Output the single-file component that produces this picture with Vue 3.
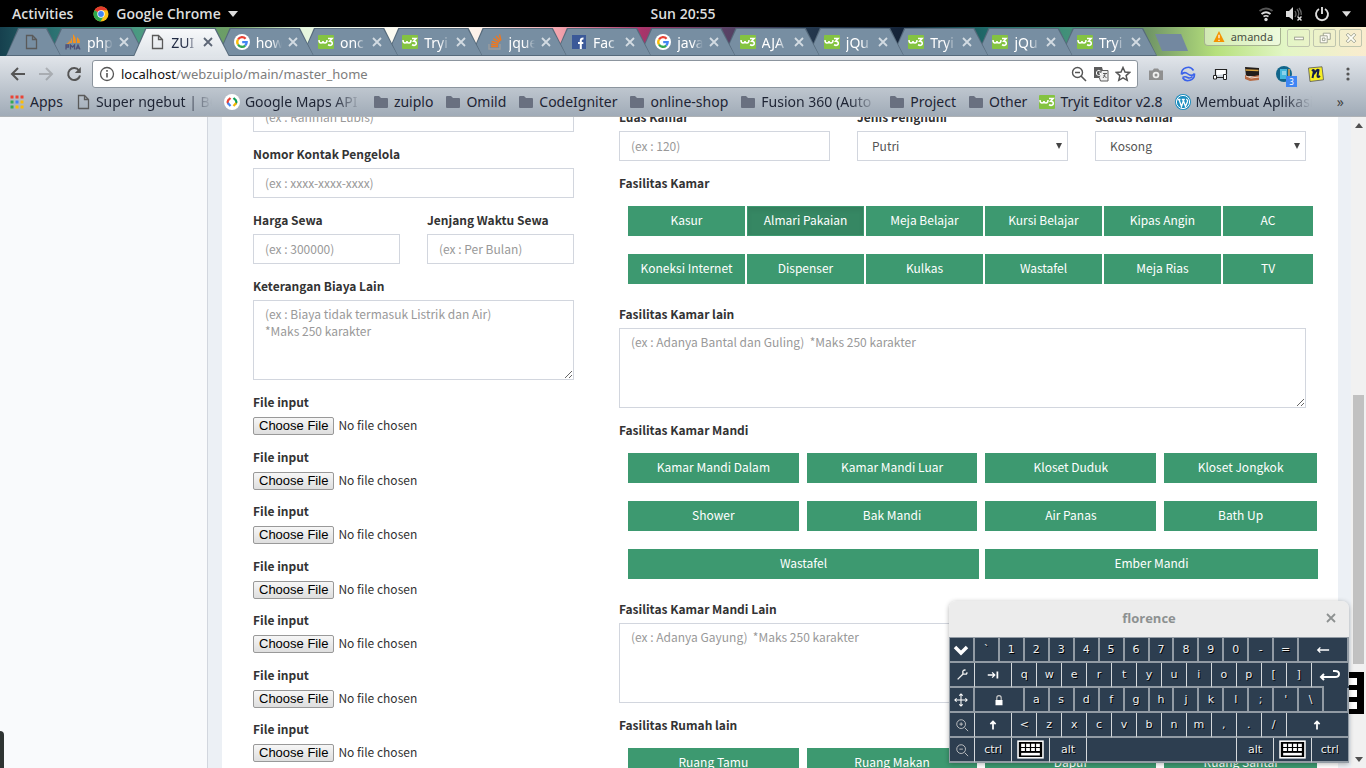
<script setup>
const tabs = [
  { icon: 'pma', title: 'php' },
  { icon: 'doc', title: 'ZUI', active: true },
  { icon: 'google', title: 'how' },
  { icon: 'w3', title: 'onc' },
  { icon: 'w3', title: 'Tryi' },
  { icon: 'stack', title: 'jque' },
  { icon: 'facebook', title: 'Fac' },
  { icon: 'google', title: 'java' },
  { icon: 'w3', title: 'AJA' },
  { icon: 'w3', title: 'jQu' },
  { icon: 'w3', title: 'Tryi' },
  { icon: 'w3', title: 'jQu' },
  { icon: 'w3', title: 'Tryi' },
]

const bookmarks = [
  { icon: 'apps', label: 'Apps' },
  { icon: 'doc', label: 'Super ngebut | BO', long: true },
  { icon: 'maps', label: 'Google Maps API', long: true },
  { icon: 'folder', label: 'zuiplo' },
  { icon: 'folder', label: 'Omild' },
  { icon: 'folder', label: 'CodeIgniter' },
  { icon: 'folder', label: 'online-shop' },
  { icon: 'folder', label: 'Fusion 360 (Auto', long: true },
  { icon: 'folder', label: 'Project' },
  { icon: 'folder', label: 'Other' },
  { icon: 'w3', label: 'Tryit Editor v2.8' },
  { icon: 'wordpress', label: 'Membuat Aplikasi', long: true },
]

const extensions = [
  { icon: 'camera', label: 'Screenshot' },
  { icon: 'wave', label: 'Sync' },
  { icon: 'devices', label: 'Devices' },
  { icon: 'kaaba', label: 'Prayer times' },
  { icon: 'book', label: 'Reader', badge: '3' },
  { icon: 'note', label: 'Notes' },
  { icon: 'dots', label: 'Menu' },
]

const roomFacilities = [
  'Kasur', 'Almari Pakaian', 'Meja Belajar', 'Kursi Belajar', 'Kipas Angin', 'AC',
  'Koneksi Internet', 'Dispenser', 'Kulkas', 'Wastafel', 'Meja Rias', 'TV',
]
const bathFacilities = [
  'Kamar Mandi Dalam', 'Kamar Mandi Luar', 'Kloset Duduk', 'Kloset Jongkok',
  'Shower', 'Bak Mandi', 'Air Panas', 'Bath Up',
]
const bathWide = ['Wastafel', 'Ember Mandi']
const houseFacilities = ['Ruang Tamu', 'Ruang Makan', 'Dapur', 'Ruang Santai']
const costHint = '(ex : Biaya tidak termasuk Listrik dan Air)\n*Maks 250 karakter'
const roomHint = '(ex : Adanya Bantal dan Guling)\u00a0 *Maks 250 karakter'
const bathHint = '(ex : Adanya Gayung)\u00a0 *Maks 250 karakter'

// Every keyboard row is 32 units wide; a letter key takes two.
const rowUnits = 32
const letters = (s) => s.split('').map((c) => ({ text: c, units: 2 }))
const keyRows = [
  [{ icon: 'chevron', units: 2 }, ...letters('`1234567890-='), { icon: 'back', units: 4 }],
  [{ icon: 'wrench', units: 2 }, { icon: 'tabkey', units: 3 }, ...letters('qwertyuiop[]'), { icon: 'enter', units: 3 }],
  [{ icon: 'move', units: 2 }, { icon: 'lock', units: 4 }, ...letters("asdfghjkl;'\\"), { units: 2, blank: true }],
  [{ icon: 'zoomin', units: 2 }, { icon: 'up', units: 3 }, ...letters('<zxcvbnm,./'), { icon: 'up', units: 5 }],
  [
    { icon: 'zoomout', units: 2 }, { text: 'ctrl', units: 3 }, { icon: 'keyb', units: 3 }, { text: 'alt', units: 3 },
    { units: 12 }, { text: 'alt', units: 3 }, { icon: 'keyb', units: 3 }, { text: 'ctrl', units: 3 },
  ],
]
</script>

<template>
  <div class="desktop">
    <svg class="sprite" aria-hidden="true">
      <symbol id="doc" viewBox="0 0 16 16"><path d="M3.5 1.5h6l4 4v9h-10z M9.5 1.5v4h4" fill="none" stroke="#5a5a5a" stroke-width="1.3" /></symbol>
      <symbol id="pma" viewBox="0 0 16 16">
        <path d="M4 9q2-2 3-6v6z M8 9V0q3 3 3 9z M12 9V3q3 2 3 6z M1 10q3-1 3.500-4v4z" fill="#f29221" />
        <path d="M1 15.500V11h2.500v2H1 M5.500 15.500V11l2 2 2-2v4.500 M11 15.500l2-4.500 2 4.500 M11.500 14h3" fill="none" stroke="#4d5077" stroke-width="1.300" />
      </symbol>
      <symbol id="google" viewBox="0 0 16 16">
        <circle cx="8" cy="8" r="8" fill="#fff" />
        <g fill="none" stroke-width="2.300">
          <path d="M11.600 4.700A4.700 4.700 0 0 0 4 5.500" stroke="#ea4335" />
          <path d="M4 5.500a4.700 4.700 0 0 0 0 5" stroke="#fbbc05" />
          <path d="M4 10.500a4.700 4.700 0 0 0 7.200 1.100" stroke="#34a853" />
          <path d="M11.200 11.600A4.700 4.700 0 0 0 12.700 8.100H8.200" stroke="#4285f4" />
        </g>
      </symbol>
      <symbol id="w3" viewBox="0 0 16 16">
        <rect y="1" width="16" height="14" rx="1" fill="#84c341" />
        <path d="M1 6q0 3 2 3t2-2q0 2 2 2t2-3" fill="none" stroke="#fff" stroke-width="1.500" />
        <path d="M10 4.500h4l-2.300 2.700q3 .3 2.500 2.600-1 2.400-4.200 1" fill="none" stroke="#fff" stroke-width="1.700" />
      </symbol>
      <symbol id="stack" viewBox="0 0 16 16">
        <path d="M2 10v5h11v-5" fill="none" stroke="#9a9c9e" stroke-width="1.400" />
        <path d="M4 12.500h7 M4 10.200l7 .7 M4.700 7.500l6.700 2 M6.300 4.500l5.900 3.700 M9 2l4.200 5.300 M12.500.5l1.400 6" stroke="#f0781e" stroke-width="1.400" />
      </symbol>
      <symbol id="facebook" viewBox="0 0 16 16">
        <rect x="1" y="1" width="14" height="14" fill="#3b5998" />
        <path d="M9.800 15V6.200q0-1.800 2.700-1.700 M7 9h5.300" fill="none" stroke="#fff" stroke-width="2" />
      </symbol>
      <symbol id="apps" viewBox="0 0 16 16">
        <path d="M1.500 1.500h3v3h-3z M6.500 1.500h3v3h-3z M11.500 1.500h3v3h-3z" fill="#ea4335" />
        <path d="M1.500 6.500h3v3h-3z M1.500 11.500h3v3h-3z" fill="#34a853" />
        <path d="M6.500 6.500h3v3h-3z" fill="#4285f4" />
        <path d="M11.500 6.500h3v3h-3z M6.500 11.500h3v3h-3z M11.500 11.500h3v3h-3z" fill="#fbbc05" />
      </symbol>
      <symbol id="maps" viewBox="0 0 16 16">
        <circle cx="8" cy="8" r="8" fill="#fff" />
        <g fill="none" stroke-width="2.200">
          <path d="M6.500 4L4.200 6.200Q3 8 4.200 9.800" stroke="#ea4335" />
          <path d="M3.800 9L6.500 12" stroke="#4285f4" />
          <path d="M9.500 4l2.300 2.200Q13 8 11.800 9.800" stroke="#0f9d58" />
          <path d="M12.200 9L9.500 12" stroke="#f4b400" />
        </g>
      </symbol>
      <symbol id="folder" viewBox="0 0 16 16"><path d="M1 3q0-1 1-1h4l2 2h6q1 0 1 1v8q0 1-1 1H2q-1 0-1-1z" fill="#697080" /></symbol>
      <symbol id="wordpress" viewBox="0 0 16 16">
        <circle cx="8" cy="8" r="8" fill="#1b8dbf" /><circle cx="8" cy="8" r="6.600" fill="none" stroke="#fff" />
        <path d="M2.500 5.500h3 M4 5.500l2.500 7L8.300 7 M6.800 5.500h3 M8 5.500l2.500 7 2-5q.3-1.500-1.200-2.500" fill="none" stroke="#fff" stroke-width="1.300" />
      </symbol>
      <symbol id="camera" viewBox="0 0 16 16">
        <path d="M1 4.500h3.500L6 2.500h4l1.500 2H15v9.500H1z" fill="#8f8f8f" /><circle cx="8" cy="9" r="3.300" fill="#eee" /><circle cx="8" cy="9" r="1.500" fill="#8f8f8f" />
      </symbol>
      <symbol id="wave" viewBox="0 0 16 16">
        <path d="M1.500 8.500A6.500 6.500 0 0 1 13.500 4.500 M14.500 7.500A6.500 6.500 0 0 1 2.500 11.500 M1.500 8.500Q4.500 5 8 8T14.500 7.500 M2.500 11.500q2.500-1.500 5 0t5-1" fill="none" stroke="#3a62ea" stroke-width="1.500" />
      </symbol>
      <symbol id="devices" viewBox="0 0 16 16">
        <path d="M3.500 9V3.500h11V8 M5 11.500h6" fill="#fff" stroke="#222" stroke-width="1.200" /><path d="M1.500 9.500h3v3.500h-3z M11.500 8.500h3v5h-3z" fill="#fff" stroke="#222" />
      </symbol>
      <symbol id="kaaba" viewBox="0 0 16 16">
        <path d="M1 1l14 1v8H2z" fill="#221d1b" /><path d="M1.500 4l13 .500" stroke="#d9a441" stroke-width="1.500" /><path d="M1 9l5 2 9-2v5l-9 1-5-2z" fill="#b76b45" /><path d="M2 10l5 2 8-1" stroke="#eed8c8" fill="none" />
      </symbol>
      <symbol id="book" viewBox="0 0 16 16">
        <circle cx="8" cy="8" r="8" fill="#11658a" /><rect x="4" y="3" width="7" height="10" fill="#43b6dd" /><path d="M6 6h4 M6 8h4" stroke="#d7f0fa" /><path d="M13 3v9" stroke="#e6a24c" stroke-width="1.500" />
      </symbol>
      <symbol id="note" viewBox="0 0 16 16">
        <path d="M.5 2L14 .8l1.500 13L2 15.500z" fill="#f6ee24" stroke="#555" stroke-width=".800" />
        <path d="M4 5q2-2 2 0L4.500 12 M6 8q3-5 4.500-4L9.500 10q0 2 2.500 0" fill="none" stroke="#111b4c" stroke-width="2" />
      </symbol>
      <symbol id="dots" viewBox="0 0 16 16"><g fill="#555"><circle cx="8" cy="3" r="1.600" /><circle cx="8" cy="8" r="1.600" /><circle cx="8" cy="13" r="1.600" /></g></symbol>
      <symbol id="chevron" viewBox="0 0 16 16"><path d="M2 5l6 6 6-6" fill="none" stroke="#fff" stroke-width="3.500" /></symbol>
      <symbol id="back" viewBox="0 0 16 16"><path d="M15 8H3 M5 5L2 8l3 3" fill="none" stroke="#fff" stroke-width="1.500" /></symbol>
      <symbol id="wrench" viewBox="0 0 16 16"><path d="M3 13L9.500 6.500 M9 3v4h4l1-2 M9 3l3-1" fill="none" stroke="#eee" stroke-width="1.600" /></symbol>
      <symbol id="tabkey" viewBox="0 0 16 16"><path d="M2 8h8 M7 5l3 3-3 3" fill="none" stroke="#fff" stroke-width="1.500" /><path d="M13 4v8" stroke="#fff" stroke-width="2" /></symbol>
      <symbol id="enter" viewBox="0 0 22 16"><path d="M2 10h14q4 0 4-3t-4-3h-2 M5 7l-3 3 3 3" fill="none" stroke="#fff" stroke-width="2" /></symbol>
      <symbol id="move" viewBox="0 0 16 16"><path d="M8 1v14 M1 8h14 M6 3l2-2 2 2 M6 13l2 2 2-2 M3 6L1 8l2 2 M13 6l2 2-2 2" fill="none" stroke="#fff" stroke-width="1.200" /></symbol>
      <symbol id="lock" viewBox="0 0 16 16"><rect x="4" y="8" width="8" height="6" fill="#fff" /><path d="M5.500 8V5.500q0-2.500 2.500-2.500t2.500 2.500V8" fill="none" stroke="#ccc" stroke-width="1.300" /></symbol>
      <symbol id="zoomin" viewBox="0 0 16 16"><circle cx="7" cy="7" r="5" fill="none" stroke="#ccc" /><path d="M11 11l4 4 M5 7h4 M7 5v4" stroke="#ccc" /></symbol>
      <symbol id="zoomout" viewBox="0 0 16 16"><circle cx="7" cy="7" r="5" fill="none" stroke="#ccc" /><path d="M11 11l4 4 M5 7h4" stroke="#ccc" /></symbol>
      <symbol id="up" viewBox="0 0 16 16"><path d="M8 13V4 M5 7l3-3 3 3" fill="none" stroke="#fff" stroke-width="2" /></symbol>
      <symbol id="keyb" viewBox="0 0 26 18">
        <rect x="1" y="1" width="24" height="16" fill="#000" stroke="#fff" stroke-width="1.500" />
        <path d="M4 5h18 M4 9h18" stroke="#fff" stroke-width="3" stroke-dasharray="3.600 1.200" /><path d="M4 13.500h18" stroke="#fff" stroke-width="2.500" />
      </symbol>
      <symbol id="x" viewBox="0 0 16 16"><path d="M4 4l8 8 M12 4l-8 8" stroke="currentColor" stroke-width="1.800" /></symbol>
    </svg>

    <header class="topbar">
      <div class="topbar-side">
        <button class="top-btn">Activities</button>
        <button class="top-btn app">
          <svg class="chrome" viewBox="0 0 16 16">
            <circle cx="8" cy="8" r="7.500" fill="#fbc116" />
            <path d="M8 8L1.500 4.200A7.500 7.500 0 0 1 14.500 4.200H8z" fill="#e33b2e" />
            <path d="M8 8L1.500 4.200A7.500 7.500 0 0 0 7.500 15.500L11 9.500z" fill="#2da94f" />
            <circle cx="8" cy="8" r="3.700" fill="#fff" /><circle cx="8" cy="8" r="2.900" fill="#4285f4" />
          </svg>
          Google Chrome
          <svg class="caret" viewBox="0 0 10 6"><path d="M0 0h10L5 6z" fill="#ddd" /></svg>
        </button>
      </div>
      <div class="clock">Sun 20:55</div>
      <div class="topbar-side status">
        <svg viewBox="0 0 16 16"><g fill="none"><path d="M1.500 5q6.500-5 13 0" stroke="#555" stroke-width="1.800" /><path d="M3.500 8q4.500-3.500 9 0" stroke="#ddd" stroke-width="1.800" /><path d="M5.500 10.500q2.500-1.500 5 0" stroke="#ddd" stroke-width="1.600" /></g><circle cx="8" cy="13.500" r="1.700" fill="#ddd" /></svg>
        <svg viewBox="0 0 16 16"><path d="M0 5h3l4-4v13L3 11H0z" fill="#ddd" /><path d="M9 5q2 3 0 6 M11 3q3 4 1 7 M13 2q3 4 2 7" fill="none" stroke="#666" stroke-width="1.300" /><path d="M11.500 10.500l4 4 M15.500 10.500l-4 4" stroke="#ddd" stroke-width="1.500" /></svg>
        <svg viewBox="0 0 16 16"><path d="M5 3a6 6 0 1 0 6 0 M8 1v7" fill="none" stroke="#ddd" stroke-width="1.900" /></svg>
        <svg class="caret" viewBox="0 0 10 6"><path d="M0 0h10L5 6z" fill="#ddd" /></svg>
      </div>
    </header>

    <nav class="tabstrip">
      <button class="tab pinned" aria-label="Pinned tab"><svg class="ico"><use href="#doc" /></svg></button>
      <div
        v-for="(t, i) in tabs"
        :key="i"
        class="tab"
        :class="{ active: t.active }"
        :style="{ zIndex: t.active ? 40 : 30 - i }"
      >
        <svg class="ico"><use :href="'#' + t.icon" /></svg>
        <span class="tab-title">{{ t.title }}</span>
        <button class="tab-close" aria-label="Close tab"><svg class="ico"><use href="#x" /></svg></button>
      </div>
      <div class="window-side">
        <button class="newtab" aria-label="New tab"></button>
        <button class="profile">
          <svg viewBox="0 0 12 12"><path d="M6 0l6 12H0z" fill="#f59300" /><path d="M6 4v4 M6 9.500v1.500" stroke="#fff" stroke-width="1.300" /></svg>
          amanda
        </button>
        <button class="win" aria-label="Minimize"><svg viewBox="0 0 16 16"><rect x="3" y="7" width="10" height="3" /></svg></button>
        <button class="win" aria-label="Restore"><svg viewBox="0 0 16 16"><path d="M6 2.500h8v7h-3 M6 2.500v3 M2.500 5.500h8v8h-8z M5 8h3v3H5z" /></svg></button>
        <button class="win" aria-label="Close"><svg viewBox="0 0 16 16"><path d="M2.500 4.500l2-2L8 6l3.500-3.500 2 2L10 8l3.500 3.500-2 2L8 10l-3.500 3.500-2-2L6 8z" /></svg></button>
      </div>
    </nav>

    <div class="chrome-bars">
      <div class="toolbar">
        <div class="nav-group">
          <button class="nav-btn" aria-label="Back"><svg viewBox="0 0 16 16"><path d="M15 8H2 M8 2L2 8l6 6" /></svg></button>
          <button class="nav-btn off" aria-label="Forward"><svg viewBox="0 0 16 16"><path d="M1 8h13 M8 2l6 6-6 6" /></svg></button>
          <button class="nav-btn" aria-label="Reload"><svg viewBox="0 0 16 16"><path d="M13 4.500A6 6 0 1 0 14 9.500" /><path d="M14.800 1v6h-6z" class="solid" /></svg></button>
        </div>
        <a class="omnibox" href="#address">
          <svg class="ico" viewBox="0 0 16 16"><circle cx="8" cy="8" r="6.500" fill="none" stroke="#555" stroke-width="1.300" /><path d="M8 7v4.500 M8 4v1.700" stroke="#555" stroke-width="1.600" /></svg>
          <span class="url"><b>localhost</b>/webzuiplo/main/master_home</span>
          <svg class="ico" viewBox="0 0 16 16"><circle cx="6.500" cy="6.500" r="5" fill="none" stroke="#555" stroke-width="1.400" /><path d="M4 6.500h5 M10 10l5 5" stroke="#555" stroke-width="1.600" /></svg>
          <svg class="ico" viewBox="0 0 16 16"><path d="M1 1h8l3 11H1z" fill="#5c5c5c" /><path d="M9 4.500h6V15H7.500l-1-3" fill="#eee" stroke="#5c5c5c" /><path d="M7.500 5q-3-2-4 1t2 3.500 2-2.500H6" fill="none" stroke="#fff" /><path d="M10 7.500h4 M12 7v1q0 2-2 4 M10.500 9l3 3" stroke="#5c5c5c" fill="none" /></svg>
          <svg class="ico" viewBox="0 0 16 16"><path d="M8 1.500l2 4.500 4.700.4-3.600 3.200 1.100 4.700L8 11.800l-4.200 2.500 1.100-4.700L1.300 6.400 6 6z" fill="none" stroke="#555" stroke-width="1.500" /></svg>
        </a>
        <div class="extensions">
          <button v-for="e in extensions" :key="e.icon" :aria-label="e.label">
            <svg class="ico"><use :href="'#' + e.icon" /></svg>
            <span v-if="e.badge" class="badge">{{ e.badge }}</span>
          </button>
        </div>
      </div>
      <div class="bookmarks">
        <a v-for="b in bookmarks" :key="b.label" href="#bookmark" :class="{ long: b.long }">
          <svg class="ico"><use :href="'#' + b.icon" /></svg><span>{{ b.label }}</span>
        </a>
        <button class="more" aria-label="More bookmarks">»</button>
      </div>
    </div>

    <div class="page">
      <aside class="sidebar"></aside>
      <main class="content">
        <form class="panel" @submit.prevent>
          <section class="col owner">
            <div class="field"><label for="name">Nama Pengelola</label><input id="name" type="text" placeholder="(ex : Rahman Lubis)" /></div>
            <div class="field"><label for="phone">Nomor Kontak Pengelola</label><input id="phone" type="text" placeholder="(ex : xxxx-xxxx-xxxx)" /></div>
            <div class="pair">
              <div class="field"><label for="price">Harga Sewa</label><input id="price" type="text" placeholder="(ex : 300000)" /></div>
              <div class="field"><label for="period">Jenjang Waktu Sewa</label><input id="period" type="text" placeholder="(ex : Per Bulan)" /></div>
            </div>
            <div class="field"><label for="cost">Keterangan Biaya Lain</label><textarea id="cost" :placeholder="costHint"></textarea></div>
            <div class="files">
              <div v-for="n in 7" :key="n" class="file"><label :for="'file' + n">File input</label><input :id="'file' + n" type="file" /></div>
            </div>
          </section>
          <section class="col room">
            <div class="triple">
              <div class="field"><label for="area">Luas Kamar</label><input id="area" type="text" placeholder="(ex : 120)" /></div>
              <div class="field">
                <label for="gender">Jenis Penghuni</label>
                <div class="select"><select id="gender"><option>Putri</option><option>Putra</option></select><svg viewBox="0 0 6 6"><path d="M0 0h6L3 6z" /></svg></div>
              </div>
              <div class="field">
                <label for="status">Status Kamar</label>
                <div class="select"><select id="status"><option>Kosong</option><option>Terisi</option></select><svg viewBox="0 0 6 6"><path d="M0 0h6L3 6z" /></svg></div>
              </div>
            </div>
            <div class="field" role="group" aria-labelledby="room-title">
              <h4 id="room-title">Fasilitas Kamar</h4>
              <div class="choices"><div class="six">
                <button v-for="f in roomFacilities" :key="f" type="button" class="choice" :class="{ pressed: f === 'Almari Pakaian' }">{{ f }}</button>
              </div></div>
            </div>
            <div class="field"><label for="room-other">Fasilitas Kamar lain</label><textarea id="room-other" :placeholder="roomHint"></textarea></div>
            <div class="field" role="group" aria-labelledby="bath-title">
              <h4 id="bath-title">Fasilitas Kamar Mandi</h4>
              <div class="choices">
                <div class="four"><button v-for="f in bathFacilities" :key="f" type="button" class="choice">{{ f }}</button></div>
                <div class="two"><button v-for="f in bathWide" :key="f" type="button" class="choice">{{ f }}</button></div>
              </div>
            </div>
            <div class="field"><label for="bath-other">Fasilitas Kamar Mandi Lain</label><textarea id="bath-other" :placeholder="bathHint"></textarea></div>
            <div class="field" role="group" aria-labelledby="house-title">
              <h4 id="house-title">Fasilitas Rumah lain</h4>
              <div class="choices"><div class="four"><button v-for="f in houseFacilities" :key="f" type="button" class="choice">{{ f }}</button></div></div>
            </div>
          </section>
        </form>
      </main>
      <div class="scrollbar">
        <svg viewBox="0 0 8 5"><path d="M0 5h8L4 0z" /></svg>
        <div class="track"><div class="thumb"></div></div>
        <svg viewBox="0 0 8 5"><path d="M0 0h8L4 5z" /></svg>
      </div>
    </div>

    <div class="dock-edge"></div>
    <svg class="florence-icon" viewBox="0 0 16 42"><path d="M0 0h16v42H0z" /><path d="M0 6h9v7H0z M0 18h9v7H0z M0 30h9v7H0z" fill="#fff" /></svg>

    <section class="keyboard">
      <header class="kb-title"><span>florence</span><button aria-label="Close keyboard"><svg class="ico"><use href="#x" /></svg></button></header>
      <div class="keys">
        <div v-for="(row, r) in keyRows" :key="r" class="key-row">
          <button
            v-for="(k, c) in row"
            :key="c"
            class="key"
            :class="{ blank: k.blank }"
            :style="{ width: (k.units / rowUnits) * 100 + '%' }"
            :aria-label="k.icon || k.text || 'space'"
          >
            <svg v-if="k.icon" :class="k.icon"><use :href="'#' + k.icon" /></svg>
            <template v-else>{{ k.text }}</template>
          </button>
        </div>
      </div>
    </section>
  </div>
</template>

<style>
body {
  margin: 0;
  overflow: hidden;
}
</style>

<style scoped>
* {
  box-sizing: border-box;
}
.desktop {
  position: relative;
  display: flex;
  flex-direction: column;
  height: 100vh;
  overflow: hidden;
  font-family: "Noto Sans", sans-serif;
}
.sprite {
  position: absolute;
  width: 0;
  height: 0;
}
button {
  margin: 0;
  padding: 0;
  border: 0;
  background: none;
  font: inherit;
  color: inherit;
}
a {
  color: inherit;
  text-decoration: none;
}
.ico {
  display: block;
  width: 16px;
  height: 16px;
  flex: none;
}
.topbar {
  display: flex;
  align-items: center;
  flex: none;
  height: 27px;
  padding: 0 12px;
  background: #000;
  color: #ddd;
  font: 600 14px/27px "Open Sans", "Noto Sans", sans-serif;
}
.topbar-side {
  display: flex;
  align-items: center;
  flex: 1;
  gap: 20px;
}
.top-btn {
  display: flex;
  align-items: center;
  gap: 7px;
}
.chrome {
  width: 16px;
  height: 16px;
}
.caret {
  width: 10px;
  height: 6px;
}
.status {
  justify-content: flex-end;
  gap: 12px;
}
.status svg:not(.caret) {
  width: 16px;
  height: 16px;
}
.status .caret {
  width: 9px;
  margin-right: 3px;
}
.tabstrip {
  display: flex;
  flex: none;
  height: 29px;
  padding: 1px 4px 0 10px;
  background: linear-gradient(90deg, #16404e 0, #2b7272 4%, #4a9a82 10%, #6f9e64 17%, #e4f5dc 22%, #fbfbf2 28%, #fdf2ea 35%, #f2a2ac 41%, #a9346a 47%, #5a4266 53%, #24384e 59%, #142338 66%, #1f6868 72%, #419079 78%, #6f9466 84%, #b6e07c 89%, #e2f6c5 94%, #faeccf 100%);
}
.tab {
  position: relative;
  display: flex;
  align-items: center;
  flex: 1;
  min-width: 0;
  padding-left: 12px;
  color: #fff;
  font-size: 14px;
  isolation: isolate;
}
.tab.pinned {
  flex: 0 0 43px;
  padding-left: 13px;
  z-index: 31;
}
.tab::before,
.tab::after {
  content: "";
  position: absolute;
  z-index: -1;
  top: 0;
  bottom: 0;
  left: -4px;
  right: -8px;
  background: #566a7b;
  clip-path: polygon(12px 0, calc(100% - 14px) 0, 100% 100%, 0 100%);
}
.tab::after {
  top: 1px;
  bottom: 1px;
  left: -3px;
  right: -7px;
  background: #778ea2;
}
.tab.active {
  color: #222b44;
}
.tab.active::after {
  bottom: 0;
  background: linear-gradient(#f7f8fa, #dfe4e9);
}
.tab-title {
  width: 26px;
  margin-left: 6px;
  overflow: hidden;
  white-space: nowrap;
  mask-image: linear-gradient(90deg, #000 60%, transparent);
}
.tab-close {
  display: flex;
  margin-left: 3px;
  color: #d3dbe2;
}
.active .tab-close {
  color: #5c6575;
}
.window-side {
  display: flex;
  flex: 0 0 213px;
  justify-content: flex-end;
  align-items: flex-start;
  gap: 3px;
}
.newtab {
  width: 33px;
  height: 17px;
  margin: 6px auto 0 6px;
  background: #7388a0;
  clip-path: polygon(0 0, 26px 0, 100% 100%, 7px 100%);
}
.profile {
  display: flex;
  align-items: center;
  gap: 6px;
  height: 18px;
  margin-right: 3px;
  padding: 0 7px 0 8px;
  border: 1px solid #a6b390;
  border-top: 0;
  border-radius: 0 0 4px 4px;
  background: rgba(255, 255, 255, 0.45);
  color: #484d42;
  font-size: 11px;
}
.profile svg {
  width: 12px;
  height: 11px;
}
.win {
  display: grid;
  place-items: center;
  width: 23px;
  height: 18px;
  margin-top: 1px;
  border: 1px solid #bfc5ae;
  border-radius: 2px;
}
.win svg {
  width: 14px;
  height: 14px;
  fill: #fffef5;
  stroke: #969a8c;
}
.chrome-bars {
  flex: none;
  height: 61px;
  border-bottom: 1px solid #aeb2b6;
  background: linear-gradient(#e1e5ea, #a0abb7);
}
.toolbar {
  display: flex;
  align-items: center;
  gap: 10px;
  height: 36px;
  padding: 0 10px;
}
.nav-group {
  display: flex;
  gap: 12px;
}
.nav-btn {
  width: 16px;
  height: 16px;
}
.nav-btn svg {
  display: block;
  fill: none;
  stroke: #555;
  stroke-width: 2;
}
.nav-btn .solid {
  fill: #555;
  stroke: none;
}
.off {
  opacity: 0.3;
}
.omnibox {
  display: flex;
  align-items: center;
  flex: 1;
  gap: 6px;
  height: 28px;
  padding: 0 6px;
  border: 1px solid #8c959e;
  border-radius: 3px;
  background: #fff;
  color: #7d7d7d;
  font-size: 13px;
}
.omnibox b {
  color: #111;
  font-weight: 400;
}
.url {
  flex: 1;
}
.extensions {
  display: flex;
  gap: 16px;
}
.extensions button {
  position: relative;
  width: 16px;
  height: 16px;
}
.badge {
  position: absolute;
  top: 10px;
  left: 10px;
  width: 11px;
  background: #3f86f4;
  color: #fff;
  font-size: 8px;
  line-height: 11px;
  text-align: center;
}
.bookmarks {
  display: flex;
  align-items: center;
  gap: 12px;
  height: 20px;
  padding: 0 9px;
  color: #1e2434;
  font-size: 14px;
  white-space: nowrap;
}
.bookmarks a {
  display: flex;
  align-items: center;
  flex: none;
  gap: 5px;
}
.bookmarks span {
  line-height: 20px;
}
.bookmarks .long span {
  width: 116px;
  overflow: hidden;
  mask-image: linear-gradient(90deg, #000 76%, transparent);
}
.more {
  margin-left: auto;
  padding-right: 13px;
  color: #444;
  line-height: 20px;
}
.page {
  display: flex;
  flex: 1;
  min-height: 0;
  overflow: hidden;
  color: #333;
  font: 12px/20px "Noto Sans CJK SC", sans-serif;
}
.sidebar {
  flex: 0 0 208px;
  border-right: 1px solid #d2d6de;
  background: #f9fafc;
}
.content {
  flex: 1;
  min-width: 0;
  padding: 0 13px 0 14px;
  overflow: hidden;
  background: #ecf0f5;
}
.panel {
  display: grid;
  grid-template-columns: 321fr 687fr;
  gap: 45px;
  padding: 0 32px 0 31px;
  background: #fff;
}
.col {
  display: flex;
  flex-direction: column;
  gap: 12px;
  min-width: 0;
}
.owner {
  margin-top: -39px;
}
.room {
  margin-top: -10px;
}
.pair,
.triple {
  display: grid;
  grid-template-columns: 1fr 1fr;
  gap: 27px;
}
.triple {
  grid-template-columns: 1fr 1fr 1fr;
}
label,
h4 {
  display: block;
  margin: 0 0 4px;
  font-size: 12px;
  font-weight: 700;
  line-height: 20px;
}
input[type="text"],
textarea,
select {
  display: block;
  width: 100%;
  height: 30px;
  margin: 0;
  padding: 4px 11px;
  border: 1px solid #d2d6de;
  border-radius: 0;
  background: #fff;
  color: #555;
  font: inherit;
}
input[type="text"] {
  padding: 3px 11px 5px;
}
textarea {
  height: 80px;
  line-height: 17px;
}
::placeholder {
  color: #999;
  opacity: 1;
}
.select {
  position: relative;
}
select {
  padding: 0 14px;
  appearance: none;
}
.select svg {
  position: absolute;
  top: 12px;
  right: 6px;
  width: 6px;
  height: 6px;
  fill: #444;
}
.files {
  display: grid;
  grid-template-rows: repeat(7, 1fr);
  height: 382px;
}
.file label {
  margin-bottom: 3px;
}
input[type="file"] {
  display: block;
  width: 100%;
  font: inherit;
}
input[type="file"]::file-selector-button {
  height: 18px;
  margin: 0 4px 0 0;
  padding: 0 5px;
  border: 1px solid #999;
  border-radius: 2px;
  background: linear-gradient(#f6f6f6, #dedede);
  color: #000;
  font: 13px/16px "Liberation Sans", sans-serif;
}
.choices {
  display: flex;
  flex-direction: column;
  gap: 18px;
  margin-right: -12px;
  padding: 9px 0 8px 9px;
}
.six,
.four,
.two {
  display: grid;
  gap: 18px 8px;
}
.six {
  grid-template-columns: repeat(5, 117fr) 90fr;
  column-gap: 2px;
  margin-right: 5px;
}
.four {
  grid-template-columns: repeat(3, 171fr) 153fr;
  margin-right: 1px;
}
.two {
  grid-template-columns: 351fr 333fr;
  column-gap: 6px;
}
.choice {
  height: 30px;
  padding-bottom: 2px;
  background: #3d9970;
  color: #fff;
}
.pressed {
  border: 1px solid #3d9970;
  background: #368763;
  box-shadow: inset 0 3px 5px rgba(0, 0, 0, 0.06);
}
.scrollbar {
  display: flex;
  flex: 0 0 15px;
  flex-direction: column;
  align-items: center;
  padding: 6px 0;
  background: #f1f1f1;
}
.scrollbar svg {
  width: 8px;
  height: 5px;
  fill: #505050;
}
.track {
  flex: 1;
  width: 11px;
  padding-top: 267px;
}
.thumb {
  height: 269px;
  background: #c1c1c1;
}
.dock-edge {
  position: absolute;
  left: 0;
  bottom: 0;
  width: 4px;
  height: 37px;
  border-radius: 0 4px 0 0;
  background: #2f3433;
}
.florence-icon {
  position: absolute;
  right: 2px;
  bottom: 54px;
  width: 16px;
  height: 42px;
}
.keyboard {
  position: absolute;
  right: 17px;
  bottom: 5px;
  width: 400px;
  border-radius: 7px 7px 0 0;
  box-shadow: 0 1px 5px rgba(0, 0, 0, 0.3);
}
.kb-title {
  position: relative;
  height: 36px;
  border-radius: 7px 7px 0 0;
  background: #ececec;
  color: #8d9191;
  font: 700 13px/34px "Open Sans", sans-serif;
  text-align: center;
}
.kb-title button {
  position: absolute;
  top: 9px;
  right: 10px;
}
.keys {
  padding-top: 1px;
  border-left: 1px solid #929ba4;
  background: #929ba4;
}
.key-row {
  display: flex;
}
.key {
  display: grid;
  place-items: center;
  height: 25px;
  min-width: 0;
  border: solid #929ba4;
  border-width: 0 2px 2px 0;
  background: #2d3e50;
  color: #eee;
  font: 11px/20px "DejaVu Sans", sans-serif;
  text-shadow: 1px 1px 0 #000;
}
.key-row:nth-child(even) .key,
.key-row:last-child .key {
  border-right: 1px solid #d5d9dc;
  border-bottom-color: #929ba4;
}
.key-row .key:last-child {
  border-right-color: #929ba4;
}
.key-row .key.blank {
  position: relative;
  box-shadow: 0 -2px 0 #2d3e50;
}
.key svg {
  width: 14px;
  height: 14px;
}
.key .chevron {
  width: 16px;
  height: 16px;
}
.key .keyb {
  width: 27px;
  height: 19px;
}
.key .enter {
  width: 24px;
  height: 16px;
}
</style>
